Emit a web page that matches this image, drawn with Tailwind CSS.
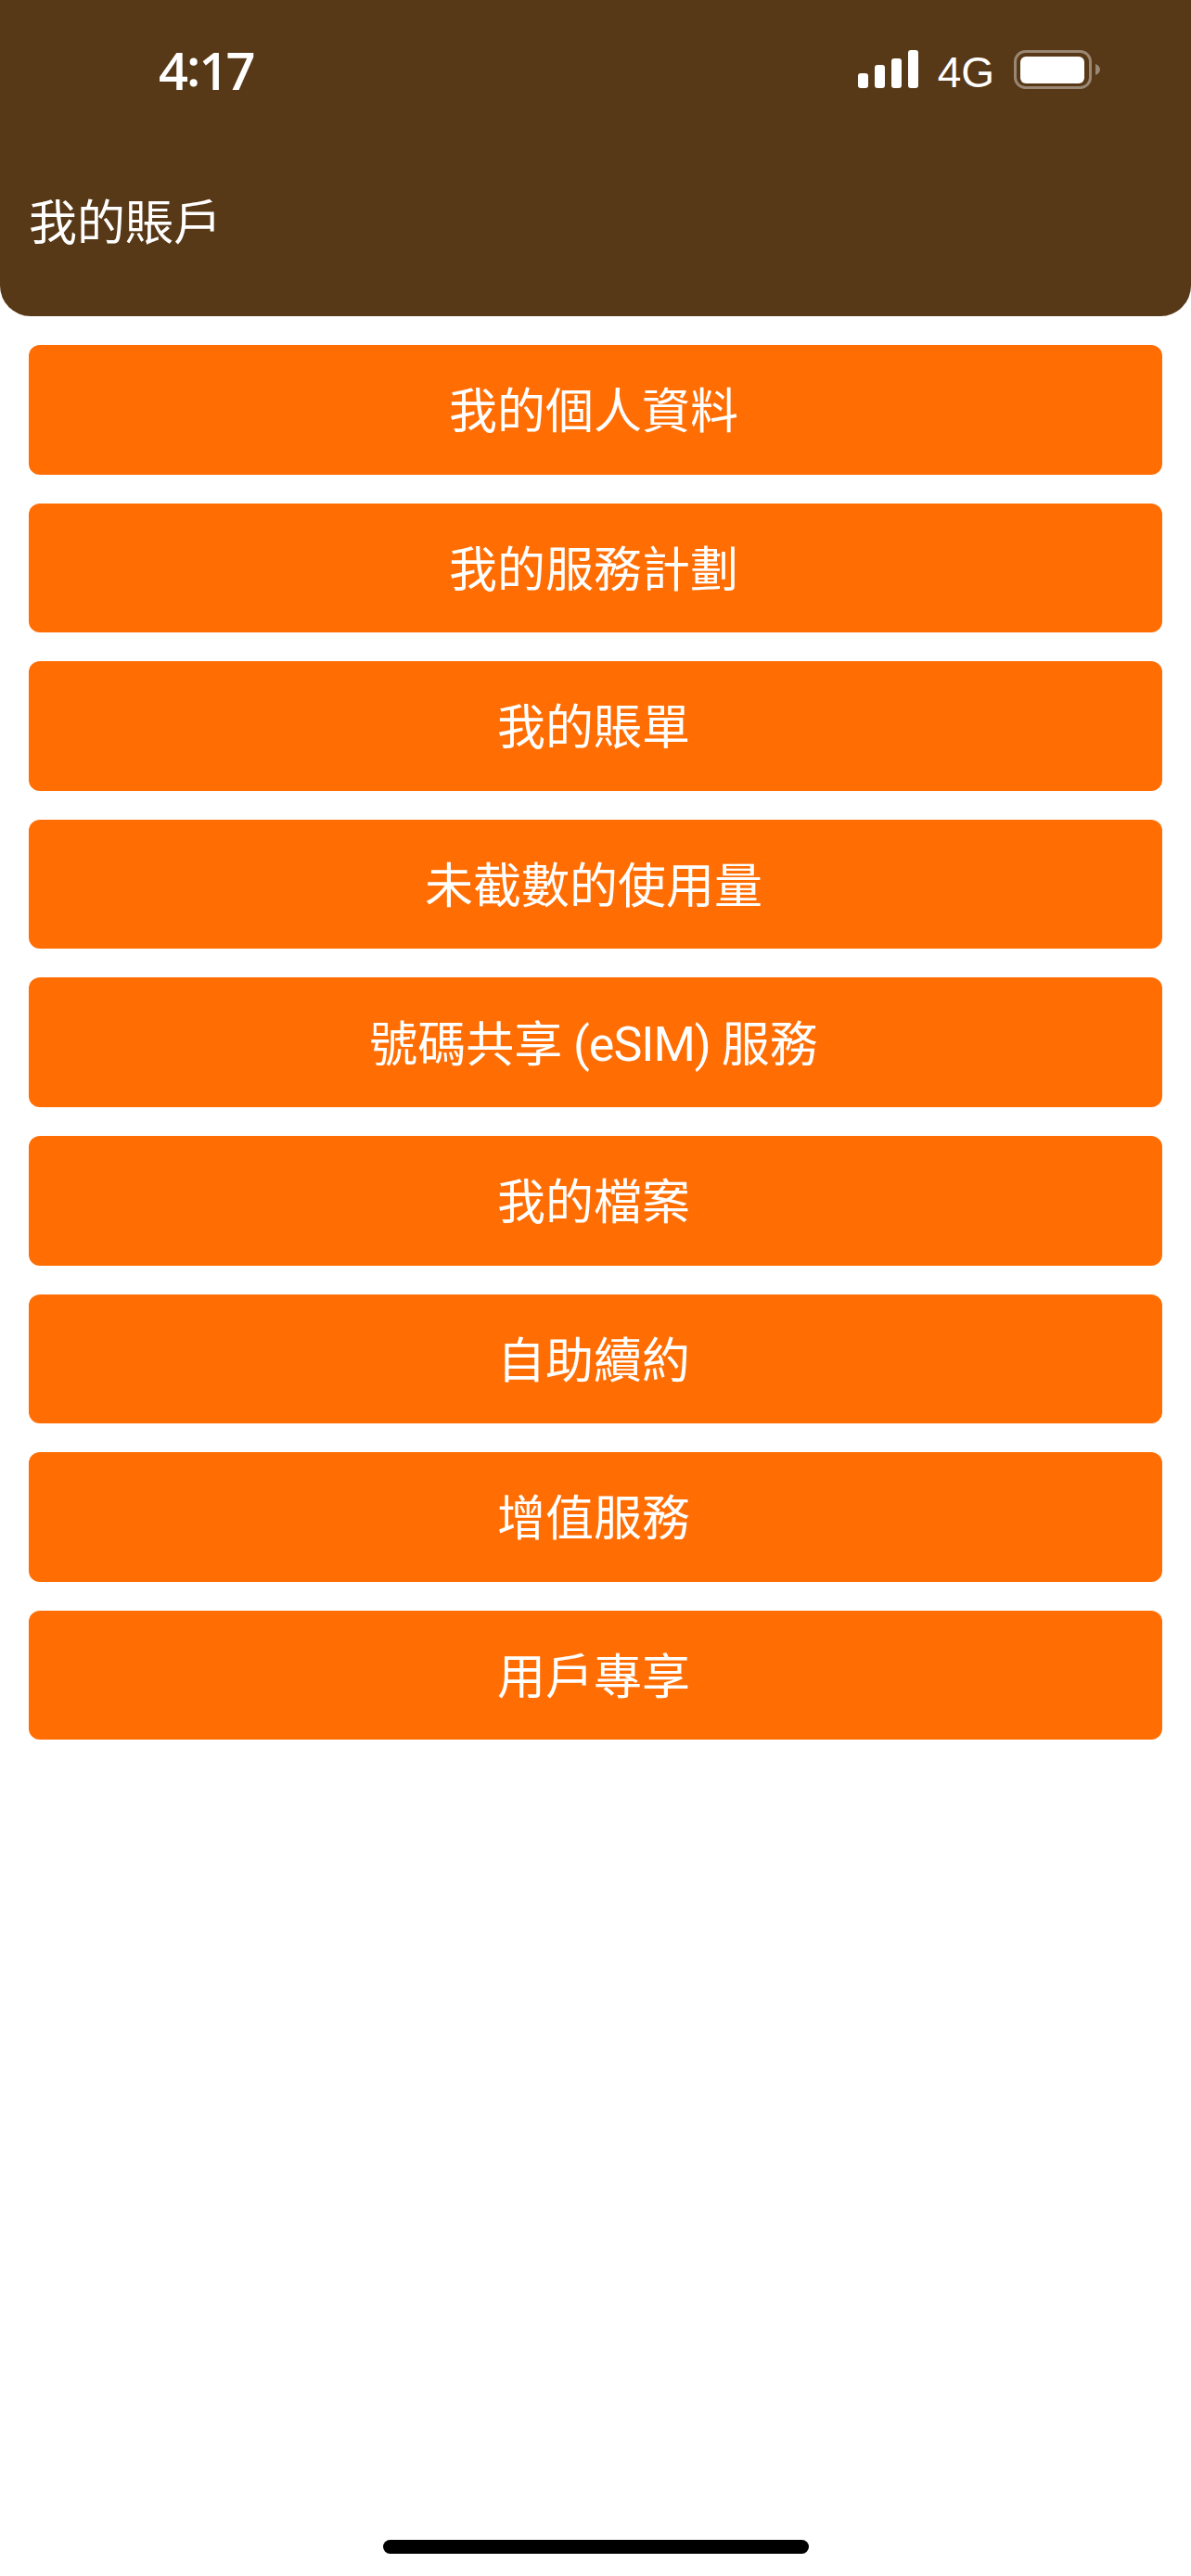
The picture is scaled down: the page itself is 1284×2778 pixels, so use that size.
<!DOCTYPE html>
<html lang="zh-Hant">
<head>
  <meta charset="UTF-8">
  <meta name="viewport" content="width=device-width, initial-scale=1.0">
  <title>我的賬戶</title>
  <script src="https://cdn.jsdelivr.net/npm/@tailwindcss/browser@4"></script>
</head>
<body class="bg-white w-[1284px] h-[2778px] relative overflow-hidden font-['Liberation_Sans','Noto_Sans_CJK_TC',sans-serif]">
  <!-- Header -->
  <header class="bg-[#573817] h-[341px] rounded-b-[33px] text-white">
    <!-- Status bar -->
    <div class="h-[153px] flex items-start justify-between">
      <span class="ml-[171px] mt-[39px] font-['Open_Sans',sans-serif] font-semibold text-[56px] leading-[72px] tracking-[-3px]">4<span class="inline-block -translate-y-[4px] mx-[1px]">:</span>17</span>
      <div class="mr-[97px] mt-[54px] flex items-start">
        <svg width="66" height="42" viewBox="0 0 66 42" fill="#fff">
          <rect x="0" y="25" width="11" height="16" rx="3"/>
          <rect x="18" y="16" width="11" height="25" rx="3"/>
          <rect x="36" y="9" width="11" height="32" rx="3"/>
          <rect x="54" y="0" width="11" height="41" rx="3"/>
        </svg>
        <span class="ml-[20px] mt-[2px] text-[46px] leading-[44px]">4G</span>
        <svg class="ml-[21px]" width="94" height="44" viewBox="0 0 94 44">
          <rect x="1.500" y="1.500" width="81" height="39" rx="11" fill="none" stroke="#fff" stroke-opacity="0.4" stroke-width="3"/>
          <rect x="7" y="7" width="69" height="29" rx="6" fill="#fff"/>
          <path d="M88 15c3 1 5 3.500 5 6s-2 5-5 6z" fill="#fff" fill-opacity="0.4"/>
        </svg>
      </div>
    </div>
    <h1 class="pl-[31px] mt-[52px] text-[52px] leading-[72px] font-normal">我的賬戶</h1>
  </header>

  <!-- Menu -->
  <nav class="mt-[31px] mx-[31px] flex flex-col gap-[31px] text-white text-[52px]">
    <a class="h-[139.6px] pt-[5px] pr-[4px] bg-[#ff6d03] rounded-[12px] flex items-center justify-center">我的個人資料</a>
    <a class="h-[139.6px] pt-[5px] pr-[4px] bg-[#ff6d03] rounded-[12px] flex items-center justify-center">我的服務計劃</a>
    <a class="h-[139.6px] pt-[5px] pr-[4px] bg-[#ff6d03] rounded-[12px] flex items-center justify-center">我的賬單</a>
    <a class="h-[139.6px] pt-[5px] pr-[4px] bg-[#ff6d03] rounded-[12px] flex items-center justify-center">未截數的使用量</a>
    <a class="h-[139.6px] pt-[5px] pr-[4px] bg-[#ff6d03] rounded-[12px] flex items-center justify-center whitespace-pre">號碼共享<span class="font-['Roboto',sans-serif] tracking-[-1px]"> (eSIM) </span>服務</a>
    <a class="h-[139.6px] pt-[5px] pr-[4px] bg-[#ff6d03] rounded-[12px] flex items-center justify-center">我的檔案</a>
    <a class="h-[139.6px] pt-[5px] pr-[4px] bg-[#ff6d03] rounded-[12px] flex items-center justify-center">自助續約</a>
    <a class="h-[139.6px] pt-[5px] pr-[4px] bg-[#ff6d03] rounded-[12px] flex items-center justify-center">增值服務</a>
    <a class="h-[139.6px] pt-[5px] pr-[4px] bg-[#ff6d03] rounded-[12px] flex items-center justify-center">用戶專享</a>
  </nav>

  <!-- Home indicator -->
  <div class="absolute left-[413px] top-[2739px] w-[459px] h-[15px] rounded-full bg-black"></div>
</body>
</html>
